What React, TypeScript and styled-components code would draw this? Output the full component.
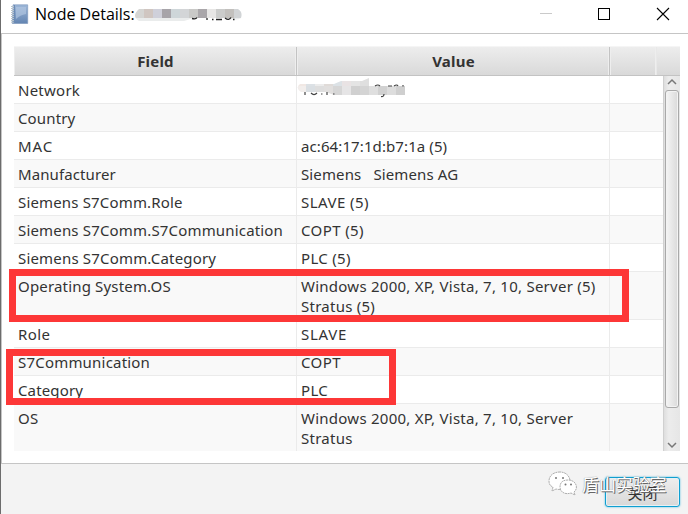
import React from 'react';
import styled, { createGlobalStyle } from 'styled-components';

const Global = createGlobalStyle`
  *{box-sizing:border-box}
  body{margin:0;background:#fff;overflow:hidden}
`;

const Window = styled.div`
  position: relative;
  width: 688px;
  height: 514px;
  display: flex;
  flex-direction: column;
  overflow: hidden;
  border-left: 1px solid #6c6c6c;
  background: #fff;
  color: #333;
  font: 15px/20px "Noto Sans", "Noto Sans CJK SC", sans-serif;
`;
const TitleBar = styled.header`
  height: 34px;
  flex: none;
  display: flex;
  align-items: flex-start;
  border-bottom: 1px solid #c5c5c5;
  padding-left: 9px;
`;
const BookIcon = styled.svg`
  margin-top: 4px;
  flex: none;
`;
const Title = styled.div`
  width: 99px;
  margin: 3px 0 0 6px;
  color: #000;
  font: 16px/23px "Open Sans", sans-serif;
  white-space: nowrap;
`;
const TitleMask = styled.svg`
  margin: 4px auto 0 0;
`;
const Controls = styled.svg`
  flex: none;
`;
const Body = styled.main`
  height: 430px;
  flex: none;
  padding: 12px 8px 12px 12px;
  border-left: 1px solid #c5c5c5;
  border-bottom: 1px solid #c5c5c5;
`;
const Header = styled.div`
  display: flex;
  width: 666px;
  height: 30px;
  background: linear-gradient(#ededed, #d9d9d9);
  border-top: 1px solid #f5f5f5;
  border-bottom: 1px solid #c3c3c3;
`;
const HeadCell = styled.div<{ $w: number; $line?: string }>`
  width: ${p => p.$w}px;
  padding-left: 1px;
  border-right: 1px solid ${p => p.$line ?? '#c3c3c3'};
  box-shadow: inset 1px 0 #eee, inset -1px 0 #eee;
  text-align: center;
  font-weight: 700;
  letter-spacing: 0.2px;
  line-height: 29px;
`;
const Table = styled.div`
  display: flex;
  height: 375px;
  overflow: hidden;
`;
const Rows = styled.div`
  width: 649px;
`;
const Row = styled.div<{ $tall?: boolean }>`
  display: flex;
  height: ${p => (p.$tall ? 48 : 28)}px;
  border-bottom: 1px solid #ebebeb;
  &:nth-child(even) { background: #f9f9f9; }
  &:last-child { border-bottom-color: #f9f9f9; }
`;
const Cell = styled.div<{ $w: number }>`
  width: ${p => p.$w}px;
  padding: 4px 0 0 4px;
  border-right: 1px solid #ebebeb;
  white-space: pre;
`;
const Label = styled.span<{ $sp?: number }>`
  letter-spacing: ${p => p.$sp ?? 0}px;
`;
const AddressMask = styled.svg`
  display: block;
  margin: -2px 0 0 -5px;
`;
const ScrollBar = styled.div`
  width: 17px;
  display: flex;
  flex-direction: column;
  align-items: center;
  background: linear-gradient(90deg, #dedede, #ececec 30%, #e6e6e6);
  border-left: 1px solid #d0d0d0;
`;
const Arrow = styled.svg`
  flex: none;
`;
const Thumb = styled.div`
  width: 14px;
  height: 318px;
  border: 1px solid #a9a9a9;
  border-radius: 3px;
  background: linear-gradient(90deg, #f5f5f5, #dadada);
  box-shadow: inset 0 0 0 1px #f3f3f3;
`;
const Footer = styled.footer`
  flex: 1;
  display: flex;
  justify-content: flex-end;
  padding: 13px 8px 0 0;
  background: #f3f3f3;
`;
const CloseButton = styled.button`
  width: 75px;
  height: 30px;
  padding: 0;
  color: #333;
  font: 15px/27px "Noto Sans CJK SC", sans-serif;
  border: 1px solid #0f9fd1;
  border-radius: 3px;
  background: linear-gradient(#eee, #d8d8d8);
  box-shadow: 0 0 2px #3fb5de, inset 0 0 0 1px #e6f1f5;
`;
const Highlight = styled.div<{ $x: number; $y: number; $w: number; $h: number }>`
  position: absolute;
  left: ${p => p.$x - 1}px;
  top: ${p => p.$y}px;
  width: ${p => p.$w}px;
  height: ${p => p.$h}px;
  border: 7px solid #fd3737;
`;
const Watermark = styled.div`
  position: absolute;
  left: 546px;
  top: 470px;
  display: flex;
  align-items: center;
  gap: 3px;
  color: #fff;
  font: 17px/28px "Noto Sans CJK SC", sans-serif;
  letter-spacing: -0.1px;
  text-shadow: 1px 1px 0 #666, 0 0 1px #777;
`;

const data: { field: string; value: string; tall?: boolean; fs?: number; vs?: number }[] = [
  { field: 'Network', value: '', fs: 0.25 },
  { field: 'Country', value: '', fs: 0.14 },
  { field: 'MAC', value: 'ac:64:17:1d:b7:1a (5)', fs: 0.9, vs: 0.1 },
  { field: 'Manufacturer', value: 'Siemens   Siemens AG', fs: 0.1, vs: 0.12 },
  { field: 'Siemens S7Comm.Role', value: 'SLAVE (5)', fs: 0.16, vs: 0.45 },
  { field: 'Siemens S7Comm.S7Communication', value: 'COPT (5)', fs: 0.17, vs: 0.4 },
  { field: 'Siemens S7Comm.Category', value: 'PLC (5)', fs: 0.18, vs: 0.3 },
  { field: 'Operating System.OS', value: 'Windows 2000, XP, Vista, 7, 10, Server (5)\nStratus (5)', tall: true, fs: 0.17, vs: 0.25 },
  { field: 'Role', value: 'SLAVE', fs: 0.4, vs: 0.7 },
  { field: 'S7Communication', value: 'COPT', fs: 0.2, vs: 0.4 },
  { field: 'Category', value: 'PLC', fs: 0.14, vs: 0.3 },
  { field: 'OS', value: 'Windows 2000, XP, Vista, 7, 10, Server\nStratus', tall: true, fs: 0.4, vs: 0.25 },
];

const titleTiles = ['#d5d5d3', '#d0c6c1', '#cfd0da', '#a7a4a9', '#ced6d9', '#d3d5d7', '#c9c9c7', '#aaa7aa', '#e7e6e5', '#cbcccb', '#c2c0bd', '#d1d4d6'];
const addressTiles = ['#f1e8e4', '#dce1e5', '#ececec', '#e0dbd8', '#dce2e6', '#e9e3e4', '#e4e4e4', '#dfdfdf'];
const addressLower = ['#f2eeec', '#dadfe3', '#dedede', '#e1dfde', '#d6d6d6', '#e6e5e6', '#d0d0d0', '#d4d4d4', '#dfdfdf', '#d1d1d1', '#dddddd', '#cfcfcf'];

export default function App() {
  return (
    <>
      <Global />
      <Window>
        <TitleBar>
          <BookIcon width="19" height="20" viewBox="0 0 19 20">
            <defs>
              <linearGradient id="book" x1="0" y1="0" x2="0" y2="1">
                <stop stopColor="#9db7d8" />
                <stop offset="1" stopColor="#6385b2" />
              </linearGradient>
            </defs>
            <path d="M3 .8H17.7V19.5H2.3Z" fill="url(#book)" stroke="#7894b8" strokeWidth=".6" />
            <path d="M6 3H16V10Q10 11 6 15Z" fill="#b3c8e2" opacity=".65" />
            <path d="M4.5 1V19" stroke="#6c8bb4" />
            <path d="M1 2.5H4M1 4.5H4M1 6.5H4M1 8.5H4M1 10.5H4M1 12.5H4M1 14.5H4M1 16.5H4M1 18.2H4" stroke="#b9c4cc" />
          </BookIcon>
          <Title>Node Details:</Title>
          <TitleMask width="110" height="20">
            <clipPath id="titleClip"><path d="M5 5H104Q109 8 107 14Q103 17 92 14L82 14H60L50 17H5Q-3 12 5 5" /></clipPath>
            <g clipPath="url(#titleClip)">
              {titleTiles.map((c, i) => <React.Fragment key={i}>
                <rect x={i * 9 + 1} y="5" width="9" height="9" fill={c} />
                <rect x={i * 9 + 1} y="14" width="9" height="4" fill="#eaecec" />
              </React.Fragment>)}
            </g>
            <path d="M58 14.5q4 1 5-1M73 14v2M78 15.5h1.5M82 15.5h6M91 14q4 3 6-.5M99 15.5h1.5" fill="none" stroke="#222" strokeWidth="1.3" />
          </TitleMask>
          <Controls width="150" height="32">
            <path d="M2 13.5h12" stroke="#cacaca" />
            <rect x="60.5" y="8.5" width="11" height="11" fill="none" stroke="#000" />
            <path d="M119 8l12 12M131 8l-12 12" stroke="#000" strokeWidth="1.1" />
          </Controls>
        </TitleBar>
        <Body>
          <Header>
            <HeadCell $w={283}>Field</HeadCell>
            <HeadCell $w={313}>Value</HeadCell>
            <HeadCell $w={47} $line="#e8e8e8" />
          </Header>
          <Table>
            <Rows>
              {data.map((r, i) => (
                <Row key={i} $tall={r.tall}>
                  <Cell $w={283}><Label $sp={r.fs}>{r.field}</Label></Cell>
                  <Cell $w={313}>
                    {i === 0 ? (
                      <AddressMask width="120" height="22">
                        <clipPath id="addrClip"><path d="M4 6H38L45 3H66L73 0L74 7H80V8H109V17H38L30 14H5Q-1 10 4 6" /></clipPath>
                        <g clipPath="url(#addrClip)">
                          {addressTiles.map((c, i2) => <rect key={i2} x={i2 * 9 + 1} y="0" width="9" height="11" fill={c} />)}
                          {addressLower.map((c, i2) => <rect key={i2} x={i2 * 9 + 1} y="8" width="9" height="9" fill={c} />)}
                        </g>
                        <path d="M9 14v3M15 15q3 3 6 0M25 16h1.5M31 14v3M37 16h1.5M79 8q3-2 5 0M88 16q0 3-3 2.5M92 8h4M98 8q3-2 4 0M107 7v1.5" stroke="#444" strokeWidth="1.2" fill="none" />
                      </AddressMask>
                    ) : <Label $sp={r.vs}>{r.value}</Label>}
                  </Cell>
                </Row>
              ))}
            </Rows>
            <ScrollBar>
              <Arrow width="16" height="14"><path d="M4 8l4-4 4 4" fill="none" stroke="#777" strokeWidth="1.5" /></Arrow>
              <Thumb />
              <Arrow width="16" height="43"><path d="M4 35l4 4 4-4" fill="none" stroke="#777" strokeWidth="1.5" /></Arrow>
            </ScrollBar>
          </Table>
        </Body>
        <Footer><CloseButton>关闭</CloseButton></Footer>
        <Highlight $x={9} $y={269} $w={620} $h={53} />
        <Highlight $x={6} $y={349} $w={390} $h={56} />
        <Watermark>
          <svg width="32" height="26" viewBox="0 0 32 26" fill="#fff" stroke="#999" strokeWidth=".8" strokeDasharray="2 .6">
            <path d="M13 1C6 1 2 5 2 10c0 3 1 5 4 6l-1 4 4-2q4 1 7 0c6-1 8-5 7-9-1-5-5-8-10-8Z" />
            <path d="M21 9c-6 0-8 3-8 7 0 5 5 8 11 6l4 2-1-3c5-4 2-12-6-12Z" />
            <g fill="#777" stroke="none"><circle cx="9" cy="7" r="1" /><circle cx="16" cy="7" r="1" /><circle cx="18.5" cy="13.5" r="1" /><circle cx="24" cy="13.5" r="1" /></g>
          </svg>
          盾山实验室
        </Watermark>
      </Window>
    </>
  );
}
